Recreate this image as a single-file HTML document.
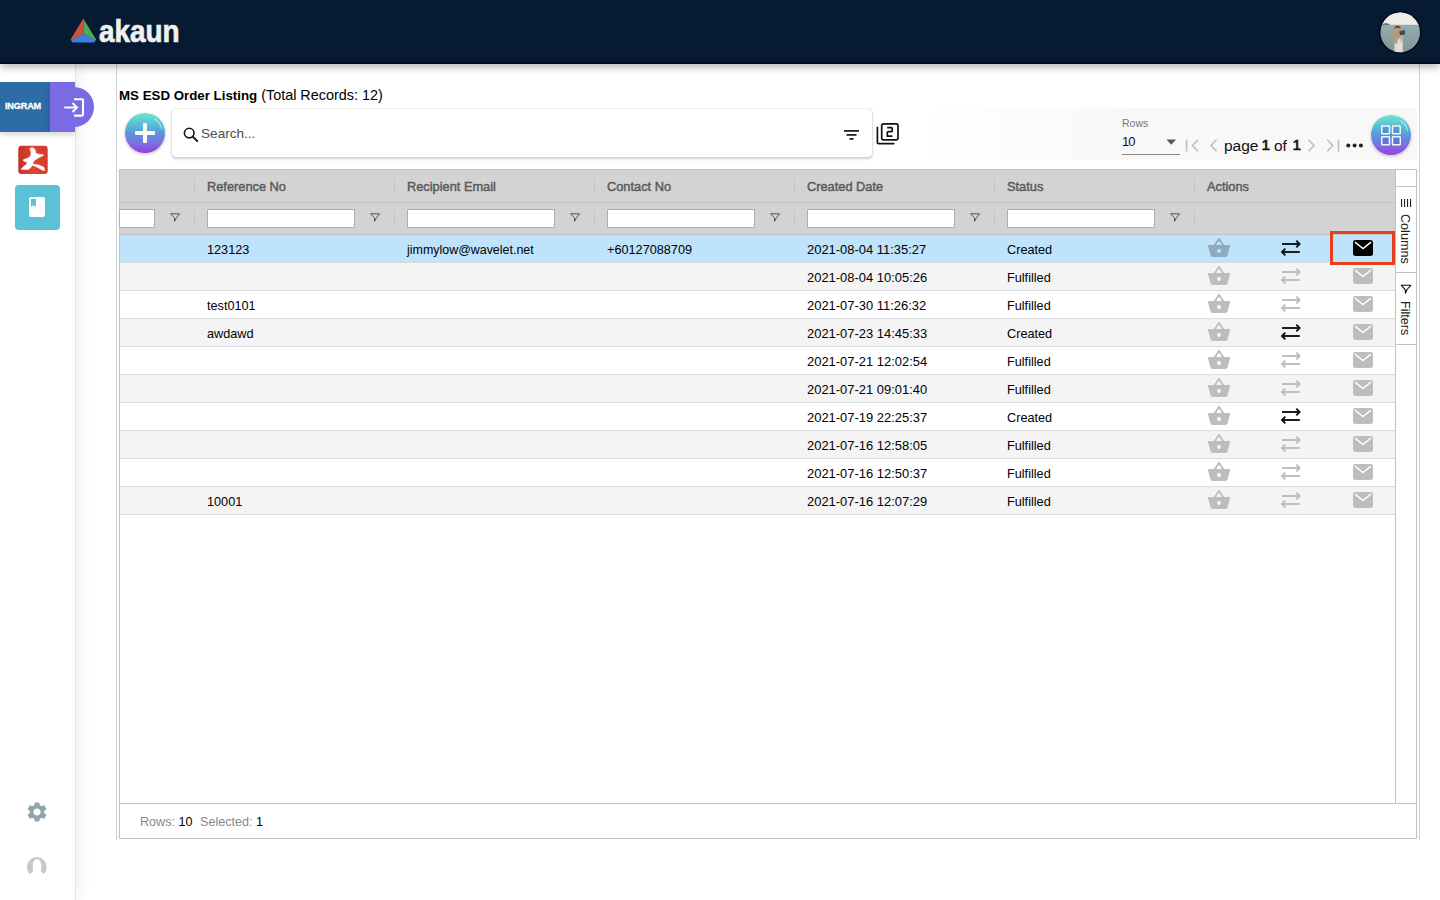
<!DOCTYPE html>
<html><head><meta charset="utf-8">
<style>
*{box-sizing:border-box;margin:0;padding:0}
html,body{width:1440px;height:900px;overflow:hidden;background:#fff;font-family:"Liberation Sans",sans-serif;color:#000}
.abs{position:absolute}
#topbar{left:0;top:0;width:1440px;height:63.5px;background:#061a31;box-shadow:inset 0 -1.5px 0 #01061c,0 3px 8px rgba(0,0,0,.3);z-index:5}
#side{left:0;top:63px;width:76px;height:837px;background:#fff;border-right:1px solid #e3e3e3;box-shadow:2px 0 14px rgba(0,0,0,.07)}
#main{left:116px;top:63px;width:1304px;height:777px;border-left:1px solid #cfd3d6;border-right:1px solid #cfd3d6}
.title{left:119px;top:86px;font-size:14.4px;white-space:nowrap;line-height:18px}
.title b{font-weight:bold;font-size:13.3px}
.grid{left:119px;top:169px;width:1298px;height:670px;border:1px solid #bdc3c7;background:#fff}
.ghead{left:120px;top:170px;width:1275px;height:65px;background:#d3d3d3;border-bottom:1px solid #bdc3c7}
.ghead:before{content:"";position:absolute;left:0;top:32px;width:100%;height:1px;background:#bdc3c7}
.hd{top:171px;height:32px;line-height:32px;font-size:12.8px;font-weight:normal;-webkit-text-stroke:0.45px #5a5a5a;color:#5a5a5a;white-space:nowrap}
.hsep{width:1px;height:14px;background:#c4c4c4}
.finp{top:209px;height:19px;background:#fff;border:1px solid #a9aeb1;border-radius:1px}
.ficon{top:213px;width:11px;height:10px;line-height:0}
.row{left:120px;width:1275px;height:28px;border-bottom:1px solid #d9dcde}
.row.sel{background:#bee3fa}
.row.odd{background:#f4f4f4}
.row.even{background:#fff}
.cell{height:28px;line-height:28px;font-size:12.7px;color:#000;white-space:nowrap}
.ic{line-height:0}
.vline{left:1395px;top:170px;width:1px;height:633px;background:#bdc3c7}
.sbar{left:120px;top:803px;width:1296px;height:1px;background:#bdc3c7}
.status{left:140px;top:813px;font-size:12.6px;color:#888;line-height:18px;white-space:nowrap}
.status b{color:#000;font-weight:normal}
.redbox{left:1330px;top:231px;width:65px;height:34px;border:3px solid #e8401f}
.sidep{left:1396px;top:170px;width:20px;height:633px;background:#fff}
.tabsep{left:1396px;width:20px;height:1px;background:#bdc3c7}
.vtext{font-size:12.6px;color:#222;white-space:nowrap;transform-origin:0 0;transform:rotate(90deg)}
.logo{left:99px;top:13.5px;font-size:31px;font-weight:bold;color:#f0f0f0;-webkit-text-stroke:.7px #f0f0f0;letter-spacing:0;transform-origin:0 0;transform:scaleX(.9);line-height:36px;white-space:nowrap}
.ingram{left:0;top:0}
.ing-blue{left:0;top:82px;width:50px;height:50px;background:#2e6ca7;box-shadow:0 3px 5px rgba(0,0,0,.15)}
.ingtxt{position:absolute;left:5px;top:19px;font-size:9.2px;font-weight:bold;color:#fff;letter-spacing:-0.2px;line-height:10px;-webkit-text-stroke:.3px #fff}
.ing-purp{left:50px;top:82px;width:25px;height:50px;background:#7a6be5;box-shadow:0 3px 5px rgba(0,0,0,.15)}
.ing-circ{left:54px;top:87px;width:40px;height:40px;border-radius:50%;background:#7a6be5}
.teal{left:15px;top:185px;width:45px;height:45px;border-radius:4px;background:#5bc1d7}
.fab{width:40px;height:40px;border-radius:50%;background:linear-gradient(180deg,#6be8d0 0%,#58bcd4 30%,#5c93dc 52%,#7a70e0 76%,#963fdd 100%);box-shadow:0 0 0 0.6px rgba(255,235,255,.8),0 1px 3px rgba(0,0,0,.3)}
.search{left:172px;top:109px;width:700px;height:48px;background:#fff;border-radius:4px;box-shadow:0 0 1.5px rgba(0,0,0,.28),0 2px 3px rgba(0,0,0,.18)}
.stext{left:201px;top:125px;font-size:13.6px;color:#4d4d4d;line-height:18px;white-space:nowrap}
.tbar{left:920px;top:108px;width:497px;height:52px;background:linear-gradient(90deg,rgba(248,248,248,0) 0,#f8f8f8 220px)}
.rowslbl{left:1122px;top:117px;font-size:10.5px;color:#777;line-height:12px}
.rowsval{left:1122px;top:134px;font-size:13px;color:#111;line-height:15px;letter-spacing:-1px}
.pgtxt{top:137px;font-size:15.5px;color:#111;line-height:18px}
.pgnum{top:136px;font-size:15.5px;font-weight:normal;-webkit-text-stroke:.7px #111;color:#111;line-height:18px}
.cell.c1{font-size:12.45px}
.cell.c3{font-size:12.95px}

</style></head><body>
<div id="topbar" class="abs">
  <svg class="abs" style="left:68px;top:16px" width="32" height="30" viewBox="68 16 32 30">
    <path d="M83.3 18.6 L70.6 39.6 Q70.4 40.6 71.6 40.4 L83.3 33.8 Z" fill="#d2503a"/>
    <path d="M83.3 18.6 L96.1 39.6 Q96.3 40.6 95.1 40.4 L83.3 33.8 Z" fill="#4faa5b"/>
    <path d="M83.3 33.8 L71.2 40.6 Q71.5 42.6 73.5 42.6 L93.2 42.6 Q95.2 42.6 95.5 40.6 Z" fill="#3b7fe2"/>
  </svg>
  <div class="abs logo">akaun</div>
  <svg class="abs" style="left:1376px;top:8px" width="50" height="50" viewBox="1376 8 50 50">
    <defs><clipPath id="av"><circle cx="1400.2" cy="32.4" r="19.8"/></clipPath>
    <linearGradient id="sea" x1="0" y1="0" x2="0" y2="1"><stop offset="0" stop-color="#a9bbbb"/><stop offset=".5" stop-color="#8ea5a6"/><stop offset="1" stop-color="#7b9394"/></linearGradient></defs>
    <circle cx="1400.2" cy="32.4" r="21.3" fill="#020a1e"/>
    <g clip-path="url(#av)">
      <rect x="1376" y="8" width="50" height="50" fill="url(#sea)"/>
      <rect x="1376" y="8" width="50" height="16.8" fill="#efede7"/>
      <path d="M1381 24.8 q2 -1.6 5 -1.5 q3 0 4.2 1.5z" fill="#3f5050"/>
      <path d="M1394.3 53 L1394.6 40 Q1396 37.5 1399 38.5 L1402.6 39 L1403 53Z" fill="#e2dcd6"/>
      <path d="M1393.5 43 Q1392.2 35 1393.2 29 Q1394.5 25.5 1397.5 25.5 Q1400.5 25.8 1401 29 L1400 36 Q1398 38.5 1397 44 Z" fill="#b39c7c"/>
      <path d="M1394 28.5 Q1395.5 25.5 1397.6 25.5 Q1400.4 25.8 1400.8 28.6 Q1397.5 27.2 1394 28.5Z" fill="#4b4a42"/>
      <path d="M1399.2 31.5 L1404.6 30 L1405.3 34.2 L1400 35.2Z" fill="#3d4848"/>
      <path d="M1400.5 35 Q1402.6 34.8 1402.8 37 L1402.4 42 L1400.6 41.5Z" fill="#c9b29a"/>
    </g>
  </svg>
</div>
<div id="side" class="abs"></div>
<div id="main" class="abs"></div>

<!-- ingram tab -->
<div class="abs ingram">
  <div class="abs ing-blue"><span class="ingtxt">INGRAM</span></div>
  <div class="abs ing-purp"></div>
  <div class="abs ing-circ"></div>
  <svg class="abs" style="left:62px;top:96px" width="24" height="22" viewBox="0 0 24 22">
    <path d="M12 3.2 H20 Q21 3.2 21 4.2 V18.6 Q21 19.6 20 19.6 H12" fill="none" stroke="#fff" stroke-width="2.1"/>
    <path d="M2.2 11.5 H14.9" stroke="#fff" stroke-width="1.9"/>
    <path d="M10.5 7 L15 11.5 L10.5 16" fill="none" stroke="#fff" stroke-width="1.9"/>
  </svg>
</div>
<!-- acrobat-like red icon -->
<svg class="abs" style="left:18px;top:145px" width="31" height="30" viewBox="0 0 31 30">
  <defs><linearGradient id="rg" x1="0" y1="0" x2="1" y2="0"><stop offset="0" stop-color="#c53028"/><stop offset=".5" stop-color="#df4430"/><stop offset="1" stop-color="#d43a2c"/></linearGradient></defs>
  <rect x="0.3" y="0.8" width="29.4" height="28.2" rx="3.2" fill="url(#rg)"/>
  <path d="M12.4,2.9 L15,2.7 L17.3,4.8 L17.6,7.4 L19.2,9 L25.2,9.7 L25.6,10.5 L20.7,12.7 L16.1,15.8 L14.6,18.4 L15.8,19.2 L20.7,19.9 L26,22.2 L26.7,25.6 L24.4,25.2 L19.2,22.2 L14.6,20.3 L13.1,22.2 L10.5,24.4 L3.7,24.6 L3.3,23.7 L5.6,21.4 L8.6,19.2 L9.3,17.6 L5.2,15.8 L5.6,14.6 L10.1,13.1 L12.7,10.8 L13.1,7.4 L12,4.4Z" fill="#fff" stroke="#fff" stroke-width=".5" stroke-linejoin="round"/>
</svg>
<!-- teal book -->
<div class="abs teal"></div>
<svg class="abs" style="left:29px;top:197px" width="17" height="21" viewBox="0 0 17 21">
  <rect x="0" y="0" width="16" height="20" rx="2" fill="#fff"/>
  <path d="M2 2 H7 V9.8 L4.5 8.2 L2 9.8Z" fill="#5bc1d7"/>
</svg>
<!-- gear -->
<svg class="abs" style="left:25px;top:800px" width="24" height="24" viewBox="0 0 24 24">
  <path fill="#90a4ae" d="M19.14 12.94c.04-.3.06-.61.06-.94 0-.32-.02-.64-.07-.94l2.03-1.58c.18-.14.23-.41.12-.61l-1.92-3.32c-.12-.22-.37-.29-.59-.22l-2.39.96c-.5-.38-1.03-.7-1.62-.94l-.36-2.54c-.04-.24-.24-.41-.48-.41h-3.84c-.24 0-.43.17-.47.41l-.36 2.54c-.59.24-1.13.57-1.62.94l-2.39-.96c-.22-.08-.47 0-.59.22L2.74 8.87c-.12.21-.08.47.12.61l2.03 1.58c-.05.3-.09.63-.09.94s.02.64.07.94l-2.03 1.58c-.18.14-.23.41-.12.61l1.92 3.32c.12.22.37.29.59.22l2.39-.96c.5.38 1.03.7 1.62.94l.36 2.54c.05.24.24.41.48.41h3.84c.24 0 .44-.17.47-.41l.36-2.54c.59-.24 1.13-.56 1.62-.94l2.39.96c.22.08.47 0 .59-.22l1.92-3.32c.12-.22.07-.47-.12-.61l-2.01-1.58zM12 15.6c-1.98 0-3.6-1.62-3.6-3.6s1.62-3.6 3.6-3.6 3.6 1.62 3.6 3.6-1.62 3.6-3.6 3.6z"/>
</svg>
<!-- user -->
<svg class="abs" style="left:24px;top:854px" width="26" height="24" viewBox="24 854 26 24">
  <path fill="#c8c8c8" d="M29.7 873.9 A9.9 9.9 0 1 1 43.9 873.9 Q42.3 873.2 40.5 870.6 Q41.3 869 41.2 866 C41.2 861.5 39.5 859.2 37 859.2 C34.5 859.2 32.8 861.5 32.8 866 Q32.7 869 33.5 870.6 Q31.7 873.2 29.7 873.9Z"/>
</svg>

<div class="abs title"><b>MS ESD Order Listing</b> (Total Records: 12)</div>

<!-- plus button -->
<div class="abs fab" style="left:125px;top:113px"></div>
<div class="abs" style="left:134.8px;top:131.2px;width:20.4px;height:3.8px;background:#fbfaf7;border-radius:1px"></div>
<div class="abs" style="left:143.1px;top:122.9px;width:3.8px;height:20.4px;background:#fbfaf7;border-radius:1px"></div>
<svg class="abs" style="left:125px;top:113px" width="40" height="40" viewBox="0 0 40 40"><path d="M29.4 5.6 A17.2 17.2 0 0 1 36.7 15.8" fill="none" stroke="rgba(160,245,250,.8)" stroke-width="1.2"/></svg>

<!-- search -->
<div class="abs search"></div>
<svg class="abs" style="left:182px;top:126px" width="17" height="17" viewBox="0 0 17 17">
  <circle cx="7.2" cy="7.1" r="4.8" fill="none" stroke="#111" stroke-width="1.6"/>
  <path d="M10.7 10.6 L15.2 15" stroke="#111" stroke-width="1.8" stroke-linecap="round"/>
</svg>
<div class="abs stext">Search...</div>
<svg class="abs" style="left:844px;top:129px" width="16" height="12" viewBox="0 0 16 12">
  <rect x="0" y="1" width="15" height="1.8" fill="#222"/>
  <rect x="2.5" y="5" width="10" height="1.8" fill="#222"/>
  <rect x="5.5" y="9" width="4" height="1.8" fill="#222"/>
</svg>
<svg class="abs" style="left:876px;top:122px" width="24" height="24" viewBox="0 0 24 24">
  <path fill="none" stroke="#111" stroke-width="1.7" stroke-linecap="round" d="M1.4 5.3 V20.4 Q1.4 21.6 2.6 21.6 H17.8"/>
  <rect x="5.7" y="1.9" width="16.3" height="16" rx="1.8" fill="none" stroke="#111" stroke-width="1.7"/>
  <path fill="none" stroke="#111" stroke-width="1.7" d="M11.2 5.6 H15.2 Q16.2 5.6 16.2 6.6 V8.7 Q16.2 9.7 15.2 9.7 H12.3 Q11.3 9.7 11.3 10.7 V14.1 H16.4"/>
</svg>

<!-- toolbar -->
<div class="abs tbar"></div>
<div class="abs rowslbl">Rows</div>
<div class="abs rowsval">10</div>
<svg class="abs" style="left:1166px;top:139px" width="11" height="7" viewBox="0 0 11 7"><path d="M0.5 0.5 H10 L5.25 5.8Z" fill="#555"/></svg>
<div class="abs" style="left:1122px;top:154px;width:58px;height:1px;background:#888"></div>
<svg class="abs" style="left:1184px;top:137px" width="160" height="16" viewBox="0 0 160 16">
  <g fill="none" stroke="#bdbdbd" stroke-width="1.6">
    <path d="M2.6 2.5 V14.5"/>
    <path d="M14 2.8 L8.5 8.5 L14 14.2"/>
    <path d="M32.5 2.8 L27 8.5 L32.5 14.2"/>
    <path d="M124.5 2.8 L130 8.5 L124.5 14.2"/>
    <path d="M143.2 2.8 L148.7 8.5 L143.2 14.2"/>
    <path d="M154.5 2.5 V14.5"/>
  </g>
</svg>
<div class="abs pgtxt" style="left:1224px">page</div>
<div class="abs pgnum" style="left:1261.5px">1</div>
<div class="abs pgtxt" style="left:1274px">of</div>
<div class="abs pgnum" style="left:1292.5px">1</div>
<svg class="abs" style="left:1346px;top:143px" width="18" height="5" viewBox="0 0 18 5">
  <circle cx="2.3" cy="2.5" r="2" fill="#222"/><circle cx="8.6" cy="2.5" r="2" fill="#222"/><circle cx="14.9" cy="2.5" r="2" fill="#222"/>
</svg>
<div class="abs fab" style="left:1371px;top:115px"></div>
<svg class="abs" style="left:1371px;top:115px" width="40" height="40" viewBox="0 0 40 40"><path d="M29.4 5.6 A17.2 17.2 0 0 1 36.7 15.8" fill="none" stroke="rgba(160,245,250,.8)" stroke-width="1.2"/></svg>
<svg class="abs" style="left:1379px;top:123px" width="24" height="24" viewBox="0 0 24 24">
  <g fill="rgba(40,80,190,.22)" stroke="#f4f4fa" stroke-width="1.5">
    <rect x="2.75" y="3.05" width="7.7" height="7.7" rx=".6"/><rect x="13.55" y="3.05" width="7.7" height="7.7" rx=".6"/>
    <rect x="2.75" y="13.85" width="7.7" height="8" rx=".6"/><rect x="13.55" y="13.85" width="7.7" height="8" rx=".6"/>
  </g>
</svg>

<div class="abs grid"></div>
<div class="abs ghead"></div>
<div class="abs hd" style="left:207px">Reference No</div>
<div class="abs hd" style="left:407px">Recipient Email</div>
<div class="abs hd" style="left:607px">Contact No</div>
<div class="abs hd" style="left:807px">Created Date</div>
<div class="abs hd" style="left:1007px">Status</div>
<div class="abs hd" style="left:1207px">Actions</div>
<div class="abs hsep" style="left:194px;top:179px"></div>
<div class="abs hsep" style="left:194px;top:211px"></div>
<div class="abs hsep" style="left:394px;top:179px"></div>
<div class="abs hsep" style="left:394px;top:211px"></div>
<div class="abs hsep" style="left:594px;top:179px"></div>
<div class="abs hsep" style="left:594px;top:211px"></div>
<div class="abs hsep" style="left:794px;top:179px"></div>
<div class="abs hsep" style="left:794px;top:211px"></div>
<div class="abs hsep" style="left:994px;top:179px"></div>
<div class="abs hsep" style="left:994px;top:211px"></div>
<div class="abs hsep" style="left:1194px;top:179px"></div>
<div class="abs hsep" style="left:1194px;top:211px"></div>
<div class="abs finp" style="left:119px;width:36px"></div>
<div class="abs ficon" style="left:170px"><svg width="11" height="10" viewBox="0 0 11 10"><path d="M0.5 0.8H9.5L6.4 4.8L4.5 8.4V4.8Z" fill="none" stroke="#555" stroke-width="1" stroke-linejoin="round"/></svg></div>
<div class="abs finp" style="left:207px;width:148px"></div>
<div class="abs ficon" style="left:370px"><svg width="11" height="10" viewBox="0 0 11 10"><path d="M0.5 0.8H9.5L6.4 4.8L4.5 8.4V4.8Z" fill="none" stroke="#555" stroke-width="1" stroke-linejoin="round"/></svg></div>
<div class="abs finp" style="left:407px;width:148px"></div>
<div class="abs ficon" style="left:570px"><svg width="11" height="10" viewBox="0 0 11 10"><path d="M0.5 0.8H9.5L6.4 4.8L4.5 8.4V4.8Z" fill="none" stroke="#555" stroke-width="1" stroke-linejoin="round"/></svg></div>
<div class="abs finp" style="left:607px;width:148px"></div>
<div class="abs ficon" style="left:770px"><svg width="11" height="10" viewBox="0 0 11 10"><path d="M0.5 0.8H9.5L6.4 4.8L4.5 8.4V4.8Z" fill="none" stroke="#555" stroke-width="1" stroke-linejoin="round"/></svg></div>
<div class="abs finp" style="left:807px;width:148px"></div>
<div class="abs ficon" style="left:970px"><svg width="11" height="10" viewBox="0 0 11 10"><path d="M0.5 0.8H9.5L6.4 4.8L4.5 8.4V4.8Z" fill="none" stroke="#555" stroke-width="1" stroke-linejoin="round"/></svg></div>
<div class="abs finp" style="left:1007px;width:148px"></div>
<div class="abs ficon" style="left:1170px"><svg width="11" height="10" viewBox="0 0 11 10"><path d="M0.5 0.8H9.5L6.4 4.8L4.5 8.4V4.8Z" fill="none" stroke="#555" stroke-width="1" stroke-linejoin="round"/></svg></div>
<div class="abs row sel" style="top:235px"></div>
<div class="abs cell c0" style="left:207px;top:236px">123123</div>
<div class="abs cell c1" style="left:407px;top:236px">jimmylow@wavelet.net</div>
<div class="abs cell c2" style="left:607px;top:236px">+60127088709</div>
<div class="abs cell c3" style="left:807px;top:236px">2021-08-04 11:35:27</div>
<div class="abs cell c4" style="left:1007px;top:236px">Created</div>
<div class="abs ic" style="left:1207px;top:236px"><svg width="24" height="24" viewBox="0 0 24 24"><path fill="#8fa9bd" d="M17.21 9l-4.38-6.56c-.19-.28-.51-.42-.83-.42-.32 0-.64.14-.83.43L6.79 9H2c-.55 0-1 .45-1 1 0 .09.01.18.04.27l2.54 9.27c.23.84 1 1.46 1.92 1.46h13c.92 0 1.69-.62 1.93-1.46l2.54-9.27L23 10c0-.55-.45-1-1-1h-4.79zM9 9l3-4.4L15 9H9zm3 8c-1.1 0-2-.9-2-2s.9-2 2-2 2 .9 2 2-.9 2-2 2z"/></svg></div>
<div class="abs ic" style="left:1280px;top:239px"><svg width="22" height="18" viewBox="0 0 22 18"><g fill="none" stroke="#111" stroke-width="1.9" stroke-linecap="butt"><path d="M2 5h17.6"/><path d="M16.3 1.7l3.3 3.3-3.3 3.3"/><path d="M19.8 13H2"/><path d="M5.3 9.7L2 13l3.3 3.3"/></g></svg></div>
<div class="abs ic" style="left:1353px;top:240px"><svg width="20" height="16" viewBox="0 0 20 16"><rect x="0" y="0" width="20" height="16" rx="2.5" fill="#000"/><path d="M2 2.2l8 6.3 8-6.3" fill="none" stroke="#fff" stroke-width="1.5"/></svg></div>
<div class="abs row odd" style="top:263px"></div>
<div class="abs cell c3" style="left:807px;top:264px">2021-08-04 10:05:26</div>
<div class="abs cell c4" style="left:1007px;top:264px">Fulfilled</div>
<div class="abs ic" style="left:1207px;top:264px"><svg width="24" height="24" viewBox="0 0 24 24"><path fill="#bdbdbd" d="M17.21 9l-4.38-6.56c-.19-.28-.51-.42-.83-.42-.32 0-.64.14-.83.43L6.79 9H2c-.55 0-1 .45-1 1 0 .09.01.18.04.27l2.54 9.27c.23.84 1 1.46 1.92 1.46h13c.92 0 1.69-.62 1.93-1.46l2.54-9.27L23 10c0-.55-.45-1-1-1h-4.79zM9 9l3-4.4L15 9H9zm3 8c-1.1 0-2-.9-2-2s.9-2 2-2 2 .9 2 2-.9 2-2 2z"/></svg></div>
<div class="abs ic" style="left:1280px;top:267px"><svg width="22" height="18" viewBox="0 0 22 18"><g fill="none" stroke="#bcbcbc" stroke-width="1.9" stroke-linecap="butt"><path d="M2 5h17.6"/><path d="M16.3 1.7l3.3 3.3-3.3 3.3"/><path d="M19.8 13H2"/><path d="M5.3 9.7L2 13l3.3 3.3"/></g></svg></div>
<div class="abs ic" style="left:1353px;top:268px"><svg width="20" height="16" viewBox="0 0 20 16"><rect x="0" y="0" width="20" height="16" rx="2.5" fill="#bdbdbd"/><path d="M2 2.2l8 6.3 8-6.3" fill="none" stroke="#fff" stroke-width="1.5"/></svg></div>
<div class="abs row even" style="top:291px"></div>
<div class="abs cell c0" style="left:207px;top:292px">test0101</div>
<div class="abs cell c3" style="left:807px;top:292px">2021-07-30 11:26:32</div>
<div class="abs cell c4" style="left:1007px;top:292px">Fulfilled</div>
<div class="abs ic" style="left:1207px;top:292px"><svg width="24" height="24" viewBox="0 0 24 24"><path fill="#bdbdbd" d="M17.21 9l-4.38-6.56c-.19-.28-.51-.42-.83-.42-.32 0-.64.14-.83.43L6.79 9H2c-.55 0-1 .45-1 1 0 .09.01.18.04.27l2.54 9.27c.23.84 1 1.46 1.92 1.46h13c.92 0 1.69-.62 1.93-1.46l2.54-9.27L23 10c0-.55-.45-1-1-1h-4.79zM9 9l3-4.4L15 9H9zm3 8c-1.1 0-2-.9-2-2s.9-2 2-2 2 .9 2 2-.9 2-2 2z"/></svg></div>
<div class="abs ic" style="left:1280px;top:295px"><svg width="22" height="18" viewBox="0 0 22 18"><g fill="none" stroke="#bcbcbc" stroke-width="1.9" stroke-linecap="butt"><path d="M2 5h17.6"/><path d="M16.3 1.7l3.3 3.3-3.3 3.3"/><path d="M19.8 13H2"/><path d="M5.3 9.7L2 13l3.3 3.3"/></g></svg></div>
<div class="abs ic" style="left:1353px;top:296px"><svg width="20" height="16" viewBox="0 0 20 16"><rect x="0" y="0" width="20" height="16" rx="2.5" fill="#bdbdbd"/><path d="M2 2.2l8 6.3 8-6.3" fill="none" stroke="#fff" stroke-width="1.5"/></svg></div>
<div class="abs row odd" style="top:319px"></div>
<div class="abs cell c0" style="left:207px;top:320px">awdawd</div>
<div class="abs cell c3" style="left:807px;top:320px">2021-07-23 14:45:33</div>
<div class="abs cell c4" style="left:1007px;top:320px">Created</div>
<div class="abs ic" style="left:1207px;top:320px"><svg width="24" height="24" viewBox="0 0 24 24"><path fill="#bdbdbd" d="M17.21 9l-4.38-6.56c-.19-.28-.51-.42-.83-.42-.32 0-.64.14-.83.43L6.79 9H2c-.55 0-1 .45-1 1 0 .09.01.18.04.27l2.54 9.27c.23.84 1 1.46 1.92 1.46h13c.92 0 1.69-.62 1.93-1.46l2.54-9.27L23 10c0-.55-.45-1-1-1h-4.79zM9 9l3-4.4L15 9H9zm3 8c-1.1 0-2-.9-2-2s.9-2 2-2 2 .9 2 2-.9 2-2 2z"/></svg></div>
<div class="abs ic" style="left:1280px;top:323px"><svg width="22" height="18" viewBox="0 0 22 18"><g fill="none" stroke="#111" stroke-width="1.9" stroke-linecap="butt"><path d="M2 5h17.6"/><path d="M16.3 1.7l3.3 3.3-3.3 3.3"/><path d="M19.8 13H2"/><path d="M5.3 9.7L2 13l3.3 3.3"/></g></svg></div>
<div class="abs ic" style="left:1353px;top:324px"><svg width="20" height="16" viewBox="0 0 20 16"><rect x="0" y="0" width="20" height="16" rx="2.5" fill="#bdbdbd"/><path d="M2 2.2l8 6.3 8-6.3" fill="none" stroke="#fff" stroke-width="1.5"/></svg></div>
<div class="abs row even" style="top:347px"></div>
<div class="abs cell c3" style="left:807px;top:348px">2021-07-21 12:02:54</div>
<div class="abs cell c4" style="left:1007px;top:348px">Fulfilled</div>
<div class="abs ic" style="left:1207px;top:348px"><svg width="24" height="24" viewBox="0 0 24 24"><path fill="#bdbdbd" d="M17.21 9l-4.38-6.56c-.19-.28-.51-.42-.83-.42-.32 0-.64.14-.83.43L6.79 9H2c-.55 0-1 .45-1 1 0 .09.01.18.04.27l2.54 9.27c.23.84 1 1.46 1.92 1.46h13c.92 0 1.69-.62 1.93-1.46l2.54-9.27L23 10c0-.55-.45-1-1-1h-4.79zM9 9l3-4.4L15 9H9zm3 8c-1.1 0-2-.9-2-2s.9-2 2-2 2 .9 2 2-.9 2-2 2z"/></svg></div>
<div class="abs ic" style="left:1280px;top:351px"><svg width="22" height="18" viewBox="0 0 22 18"><g fill="none" stroke="#bcbcbc" stroke-width="1.9" stroke-linecap="butt"><path d="M2 5h17.6"/><path d="M16.3 1.7l3.3 3.3-3.3 3.3"/><path d="M19.8 13H2"/><path d="M5.3 9.7L2 13l3.3 3.3"/></g></svg></div>
<div class="abs ic" style="left:1353px;top:352px"><svg width="20" height="16" viewBox="0 0 20 16"><rect x="0" y="0" width="20" height="16" rx="2.5" fill="#bdbdbd"/><path d="M2 2.2l8 6.3 8-6.3" fill="none" stroke="#fff" stroke-width="1.5"/></svg></div>
<div class="abs row odd" style="top:375px"></div>
<div class="abs cell c3" style="left:807px;top:376px">2021-07-21 09:01:40</div>
<div class="abs cell c4" style="left:1007px;top:376px">Fulfilled</div>
<div class="abs ic" style="left:1207px;top:376px"><svg width="24" height="24" viewBox="0 0 24 24"><path fill="#bdbdbd" d="M17.21 9l-4.38-6.56c-.19-.28-.51-.42-.83-.42-.32 0-.64.14-.83.43L6.79 9H2c-.55 0-1 .45-1 1 0 .09.01.18.04.27l2.54 9.27c.23.84 1 1.46 1.92 1.46h13c.92 0 1.69-.62 1.93-1.46l2.54-9.27L23 10c0-.55-.45-1-1-1h-4.79zM9 9l3-4.4L15 9H9zm3 8c-1.1 0-2-.9-2-2s.9-2 2-2 2 .9 2 2-.9 2-2 2z"/></svg></div>
<div class="abs ic" style="left:1280px;top:379px"><svg width="22" height="18" viewBox="0 0 22 18"><g fill="none" stroke="#bcbcbc" stroke-width="1.9" stroke-linecap="butt"><path d="M2 5h17.6"/><path d="M16.3 1.7l3.3 3.3-3.3 3.3"/><path d="M19.8 13H2"/><path d="M5.3 9.7L2 13l3.3 3.3"/></g></svg></div>
<div class="abs ic" style="left:1353px;top:380px"><svg width="20" height="16" viewBox="0 0 20 16"><rect x="0" y="0" width="20" height="16" rx="2.5" fill="#bdbdbd"/><path d="M2 2.2l8 6.3 8-6.3" fill="none" stroke="#fff" stroke-width="1.5"/></svg></div>
<div class="abs row even" style="top:403px"></div>
<div class="abs cell c3" style="left:807px;top:404px">2021-07-19 22:25:37</div>
<div class="abs cell c4" style="left:1007px;top:404px">Created</div>
<div class="abs ic" style="left:1207px;top:404px"><svg width="24" height="24" viewBox="0 0 24 24"><path fill="#bdbdbd" d="M17.21 9l-4.38-6.56c-.19-.28-.51-.42-.83-.42-.32 0-.64.14-.83.43L6.79 9H2c-.55 0-1 .45-1 1 0 .09.01.18.04.27l2.54 9.27c.23.84 1 1.46 1.92 1.46h13c.92 0 1.69-.62 1.93-1.46l2.54-9.27L23 10c0-.55-.45-1-1-1h-4.79zM9 9l3-4.4L15 9H9zm3 8c-1.1 0-2-.9-2-2s.9-2 2-2 2 .9 2 2-.9 2-2 2z"/></svg></div>
<div class="abs ic" style="left:1280px;top:407px"><svg width="22" height="18" viewBox="0 0 22 18"><g fill="none" stroke="#111" stroke-width="1.9" stroke-linecap="butt"><path d="M2 5h17.6"/><path d="M16.3 1.7l3.3 3.3-3.3 3.3"/><path d="M19.8 13H2"/><path d="M5.3 9.7L2 13l3.3 3.3"/></g></svg></div>
<div class="abs ic" style="left:1353px;top:408px"><svg width="20" height="16" viewBox="0 0 20 16"><rect x="0" y="0" width="20" height="16" rx="2.5" fill="#bdbdbd"/><path d="M2 2.2l8 6.3 8-6.3" fill="none" stroke="#fff" stroke-width="1.5"/></svg></div>
<div class="abs row odd" style="top:431px"></div>
<div class="abs cell c3" style="left:807px;top:432px">2021-07-16 12:58:05</div>
<div class="abs cell c4" style="left:1007px;top:432px">Fulfilled</div>
<div class="abs ic" style="left:1207px;top:432px"><svg width="24" height="24" viewBox="0 0 24 24"><path fill="#bdbdbd" d="M17.21 9l-4.38-6.56c-.19-.28-.51-.42-.83-.42-.32 0-.64.14-.83.43L6.79 9H2c-.55 0-1 .45-1 1 0 .09.01.18.04.27l2.54 9.27c.23.84 1 1.46 1.92 1.46h13c.92 0 1.69-.62 1.93-1.46l2.54-9.27L23 10c0-.55-.45-1-1-1h-4.79zM9 9l3-4.4L15 9H9zm3 8c-1.1 0-2-.9-2-2s.9-2 2-2 2 .9 2 2-.9 2-2 2z"/></svg></div>
<div class="abs ic" style="left:1280px;top:435px"><svg width="22" height="18" viewBox="0 0 22 18"><g fill="none" stroke="#bcbcbc" stroke-width="1.9" stroke-linecap="butt"><path d="M2 5h17.6"/><path d="M16.3 1.7l3.3 3.3-3.3 3.3"/><path d="M19.8 13H2"/><path d="M5.3 9.7L2 13l3.3 3.3"/></g></svg></div>
<div class="abs ic" style="left:1353px;top:436px"><svg width="20" height="16" viewBox="0 0 20 16"><rect x="0" y="0" width="20" height="16" rx="2.5" fill="#bdbdbd"/><path d="M2 2.2l8 6.3 8-6.3" fill="none" stroke="#fff" stroke-width="1.5"/></svg></div>
<div class="abs row even" style="top:459px"></div>
<div class="abs cell c3" style="left:807px;top:460px">2021-07-16 12:50:37</div>
<div class="abs cell c4" style="left:1007px;top:460px">Fulfilled</div>
<div class="abs ic" style="left:1207px;top:460px"><svg width="24" height="24" viewBox="0 0 24 24"><path fill="#bdbdbd" d="M17.21 9l-4.38-6.56c-.19-.28-.51-.42-.83-.42-.32 0-.64.14-.83.43L6.79 9H2c-.55 0-1 .45-1 1 0 .09.01.18.04.27l2.54 9.27c.23.84 1 1.46 1.92 1.46h13c.92 0 1.69-.62 1.93-1.46l2.54-9.27L23 10c0-.55-.45-1-1-1h-4.79zM9 9l3-4.4L15 9H9zm3 8c-1.1 0-2-.9-2-2s.9-2 2-2 2 .9 2 2-.9 2-2 2z"/></svg></div>
<div class="abs ic" style="left:1280px;top:463px"><svg width="22" height="18" viewBox="0 0 22 18"><g fill="none" stroke="#bcbcbc" stroke-width="1.9" stroke-linecap="butt"><path d="M2 5h17.6"/><path d="M16.3 1.7l3.3 3.3-3.3 3.3"/><path d="M19.8 13H2"/><path d="M5.3 9.7L2 13l3.3 3.3"/></g></svg></div>
<div class="abs ic" style="left:1353px;top:464px"><svg width="20" height="16" viewBox="0 0 20 16"><rect x="0" y="0" width="20" height="16" rx="2.5" fill="#bdbdbd"/><path d="M2 2.2l8 6.3 8-6.3" fill="none" stroke="#fff" stroke-width="1.5"/></svg></div>
<div class="abs row odd" style="top:487px"></div>
<div class="abs cell c0" style="left:207px;top:488px">10001</div>
<div class="abs cell c3" style="left:807px;top:488px">2021-07-16 12:07:29</div>
<div class="abs cell c4" style="left:1007px;top:488px">Fulfilled</div>
<div class="abs ic" style="left:1207px;top:488px"><svg width="24" height="24" viewBox="0 0 24 24"><path fill="#bdbdbd" d="M17.21 9l-4.38-6.56c-.19-.28-.51-.42-.83-.42-.32 0-.64.14-.83.43L6.79 9H2c-.55 0-1 .45-1 1 0 .09.01.18.04.27l2.54 9.27c.23.84 1 1.46 1.92 1.46h13c.92 0 1.69-.62 1.93-1.46l2.54-9.27L23 10c0-.55-.45-1-1-1h-4.79zM9 9l3-4.4L15 9H9zm3 8c-1.1 0-2-.9-2-2s.9-2 2-2 2 .9 2 2-.9 2-2 2z"/></svg></div>
<div class="abs ic" style="left:1280px;top:491px"><svg width="22" height="18" viewBox="0 0 22 18"><g fill="none" stroke="#bcbcbc" stroke-width="1.9" stroke-linecap="butt"><path d="M2 5h17.6"/><path d="M16.3 1.7l3.3 3.3-3.3 3.3"/><path d="M19.8 13H2"/><path d="M5.3 9.7L2 13l3.3 3.3"/></g></svg></div>
<div class="abs ic" style="left:1353px;top:492px"><svg width="20" height="16" viewBox="0 0 20 16"><rect x="0" y="0" width="20" height="16" rx="2.5" fill="#bdbdbd"/><path d="M2 2.2l8 6.3 8-6.3" fill="none" stroke="#fff" stroke-width="1.5"/></svg></div>
<div class="abs vline"></div>
<div class="abs sbar"></div>
<div class="abs sidep"></div>
<div class="abs tabsep" style="top:186px"></div>
<div class="abs tabsep" style="top:272px"></div>
<div class="abs tabsep" style="top:344px"></div>
<svg class="abs" style="left:1400px;top:198px" width="12" height="10" viewBox="0 0 12 10"><g fill="#222"><rect x="1" y="1" width="1.1" height="8"/><rect x="4" y="1" width="1.1" height="8"/><rect x="7" y="1" width="1.1" height="8"/><rect x="10" y="1" width="1.1" height="8"/></g></svg>
<div class="abs vtext" style="left:1412px;top:213.5px">Columns</div>
<svg class="abs" style="left:1400px;top:284px" width="12" height="11" viewBox="0 0 12 11"><path d="M1.3 1.3 H10.8 L7 5.5 L5.5 9.3 L5.2 5.6Z" fill="none" stroke="#111" stroke-width="1.1" stroke-linejoin="round"/></svg>
<div class="abs vtext" style="left:1412px;top:300.5px">Filters</div>
<div class="abs redbox"></div>
<div class="abs status">Rows: <b>10</b><span style="margin-left:7.5px">Selected: </span><b>1</b></div>

</body></html>
